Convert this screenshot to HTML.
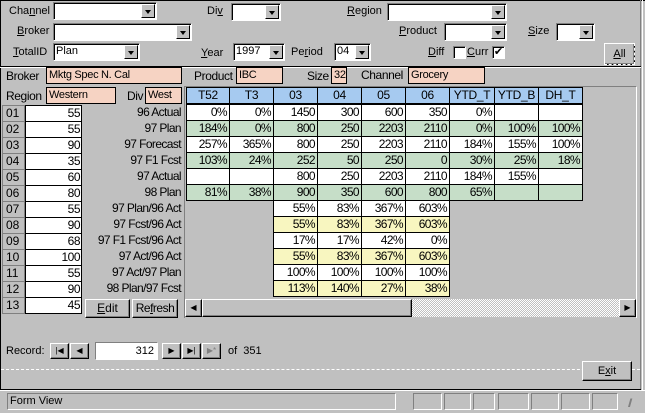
<!DOCTYPE html>
<html><head><style>
*{box-sizing:border-box;margin:0;padding:0}
body{width:645px;height:413px;background:#c0c0c0;font-family:"Liberation Sans",sans-serif;font-size:11px;color:#000;position:relative;overflow:hidden}
.a{position:absolute}
.l{position:absolute;white-space:nowrap;line-height:14px}
.cb{position:absolute;background:#fff;border:1px solid;border-color:#808080 #fff #fff #808080;box-shadow:inset 1px 1px 0 #000}
.cb i{position:absolute;right:1px;top:1px;bottom:1px;width:14px;background:#c0c0c0;border:1px solid;border-color:#fff #000 #000 #fff}
.cb i:after{content:"";position:absolute;left:3px;top:5px;border:3px solid transparent;border-top:4px solid #000;border-bottom:0}
.cb span{position:absolute;left:2px;top:1px}
.pk{position:absolute;background:#f6d3c3;border:1px solid #000;padding-left:2px;line-height:15px;letter-spacing:-0.3px}
.btn{position:absolute;background:#c0c0c0;border:1px solid;border-color:#fff #000 #000 #fff;box-shadow:inset -1px -1px 0 #808080;text-align:center}
.c{position:absolute;border:1px solid #000;text-align:right;padding-right:2px;line-height:15px;height:17px;font-size:12px;letter-spacing:-0.6px}
.h{position:absolute;background:#a6caf0;border:1px solid #000;text-align:center;line-height:15px;height:17px;font-size:12px;letter-spacing:-0.3px}
.g{background:#c6dec8}.w{background:#fff}.y{background:#f8f6c0}
.n{position:absolute;left:2px;width:23px;height:17px;border:1px solid #808080;background:#c0c0c0;line-height:15px;padding-left:3px;font-size:12px}
.v{position:absolute;left:25px;width:57px;height:17px;background:#fff;border:1px solid #000;text-align:right;padding-right:1px;line-height:15px;font-size:12px;letter-spacing:-0.5px}
.rl{position:absolute;right:464px;white-space:nowrap;line-height:16px;font-size:12px;letter-spacing:-0.6px}
u{text-decoration:underline}
</style></head><body>
<div class="a" style="left:0;top:0;width:645px;height:1px;background:#000"></div>
<div class="a" style="left:0;top:0;width:1px;height:390px;background:#000"></div>
<div class="a" style="left:640px;top:0;width:1px;height:390px;background:#808080"></div>
<div class="a" style="left:642px;top:0;width:1px;height:390px;background:#fff"></div>

<div class="l" style="left:9px;top:4px">Cha<u>n</u>nel</div>
<div class="cb" style="left:53px;top:2px;width:104px;height:18px"><i></i></div>
<div class="l" style="left:207px;top:4px">Di<u>v</u></div>
<div class="cb" style="left:231px;top:3px;width:50px;height:18px"><i></i></div>
<div class="l" style="left:347px;top:4px"><u>R</u>egion</div>
<div class="cb" style="left:387px;top:3px;width:120px;height:18px"><i></i></div>
<div class="l" style="left:17px;top:24px"><u>B</u>roker</div>
<div class="cb" style="left:53px;top:23px;width:139px;height:18px"><i></i></div>
<div class="l" style="left:399px;top:24px"><u>P</u>roduct</div>
<div class="cb" style="left:444px;top:23px;width:63px;height:18px"><i></i></div>
<div class="l" style="left:528px;top:24px"><u>S</u>ize</div>
<div class="cb" style="left:556px;top:23px;width:39px;height:18px"><i></i></div>
<div class="l" style="left:13px;top:45px"><u>T</u>otalID</div>
<div class="cb" style="left:53px;top:43px;width:87px;height:18px"><span>Plan</span><i></i></div>
<div class="l" style="left:201px;top:46px"><u>Y</u>ear</div>
<div class="cb" style="left:233px;top:43px;width:52px;height:18px"><span>1997</span><i></i></div>
<div class="l" style="left:291px;top:45px">Pe<u>r</u>iod</div>
<div class="cb" style="left:334px;top:43px;width:37px;height:18px"><span>04</span><i></i></div>
<div class="l" style="left:428px;top:45px"><u>D</u>iff</div>
<div class="cb" style="left:453px;top:46px;width:13px;height:13px"></div>
<div class="l" style="left:467px;top:45px"><u>C</u>urr</div>
<div class="cb" style="left:492px;top:46px;width:13px;height:13px;font-size:11px;line-height:10px;text-align:center">✔</div>
<div class="btn" style="left:604px;top:43px;width:31px;height:22px;line-height:20px;outline:1px dashed #fff;outline-offset:-1px"><u>A</u>ll</div>

<div class="a" style="left:0;top:66px;width:641px;height:1px;background:#000"></div>
<div class="a" style="left:0;top:67px;width:641px;height:1px;background:#fff"></div>

<div class="l" style="left:6px;top:69px;font-size:12px;letter-spacing:-0.4px">Broker</div>
<div class="pk" style="left:46px;top:67px;width:136px;height:17px">Mktg Spec N. Cal</div>
<div class="l" style="left:194px;top:69px;font-size:12px;letter-spacing:-0.4px">Product</div>
<div class="pk" style="left:236px;top:67px;width:47px;height:17px">IBC</div>
<div class="l" style="left:307px;top:69px;font-size:12px;letter-spacing:-0.4px">Size</div>
<div class="pk" style="left:331px;top:67px;width:16px;height:17px">32</div>
<div class="l" style="left:361px;top:68px;font-size:12px;letter-spacing:-0.4px">Channel</div>
<div class="pk" style="left:408px;top:67px;width:77px;height:17px">Grocery</div>
<div class="l" style="left:6px;top:89px;font-size:12px;letter-spacing:-0.4px">Region</div>
<div class="pk" style="left:46px;top:87px;width:70px;height:17px">Western</div>
<div class="l" style="left:127px;top:89px;font-size:12px;letter-spacing:-0.4px">Div</div>
<div class="pk" style="left:145px;top:87px;width:37px;height:17px">West</div>

<div class="a" style="left:184px;top:86px;width:453px;height:232px;border-top:1px solid #808080;border-left:1px solid #808080;border-right:1px solid #fff"></div>

<div class="h" style="left:186px;top:87px;width:44px">T52</div>
<div class="h" style="left:229px;top:87px;width:45px">T3</div>
<div class="h" style="left:273px;top:87px;width:45px">03</div>
<div class="h" style="left:317px;top:87px;width:45px">04</div>
<div class="h" style="left:361px;top:87px;width:45px">05</div>
<div class="h" style="left:405px;top:87px;width:45px">06</div>
<div class="h" style="left:449px;top:87px;width:46px">YTD_T</div>
<div class="h" style="left:494px;top:87px;width:45px">YTD_B</div>
<div class="h" style="left:538px;top:87px;width:45px">DH_T</div>

<div id="grid"></div>

<div class="rl" style="top:104px">96 Actual</div>
<div class="rl" style="top:120px">97 Plan</div>
<div class="rl" style="top:136px">97 Forecast</div>
<div class="rl" style="top:152px">97 F1 Fcst</div>
<div class="rl" style="top:168px">97 Actual</div>
<div class="rl" style="top:184px">98 Plan</div>
<div class="rl" style="top:200px">97 Plan/96 Act</div>
<div class="rl" style="top:216px">97 Fcst/96 Act</div>
<div class="rl" style="top:232px">97 F1 Fcst/96 Act</div>
<div class="rl" style="top:248px">97 Act/96 Act</div>
<div class="rl" style="top:264px">97 Act/97 Plan</div>
<div class="rl" style="top:280px">98 Plan/97 Fcst</div>

<div class="btn" style="left:85px;top:299px;width:45px;height:19px;line-height:17px;font-size:12px"><u>E</u>dit</div>
<div class="btn" style="left:132px;top:299px;width:46px;height:19px;line-height:17px;font-size:12px;letter-spacing:-0.5px">Re<u>f</u>resh</div>

<div class="a" style="left:185px;top:299px;width:451px;height:18px;background:repeating-conic-gradient(#c0c0c0 0 25%,#fff 0 50%) 0 0/2px 2px"></div>
<div class="btn" style="left:185px;top:299px;width:17px;height:18px;font-size:8px;line-height:16px">◀</div>
<div class="btn" style="left:202px;top:299px;width:210px;height:18px"></div>
<div class="btn" style="left:619px;top:299px;width:17px;height:18px;font-size:8px;line-height:16px">▶</div>

<div class="l" style="left:6px;top:344px">Record:</div>
<div class="btn" style="left:50px;top:343px;width:19px;height:16px;font-size:8px;line-height:14px">|◀</div>
<div class="btn" style="left:70px;top:343px;width:19px;height:16px;font-size:8px;line-height:14px">◀</div>
<div class="a" style="left:95px;top:342px;width:63px;height:18px;background:#fff;border:1px solid;border-color:#808080 #fff #fff #808080;text-align:right;padding-right:3px;line-height:16px">312</div>
<div class="btn" style="left:162px;top:343px;width:19px;height:16px;font-size:8px;line-height:14px">▶</div>
<div class="btn" style="left:182px;top:343px;width:19px;height:16px;font-size:8px;line-height:14px">▶|</div>
<div class="btn" style="left:202px;top:343px;width:19px;height:16px;font-size:8px;line-height:14px;color:#808080">▶*</div>
<div class="l" style="left:228px;top:344px">of&nbsp; 351</div>
<div class="a" style="left:1px;top:369px;width:639px;border-top:1px dashed #fff"></div>
<div class="btn" style="left:582px;top:361px;width:50px;height:20px;line-height:18px">E<u>x</u>it</div>
<div class="a" style="left:0;top:389px;width:641px;height:1px;background:#000"></div>

<div class="a" style="left:0;top:390px;width:645px;height:23px;background:#c0c0c0;border-top:1px solid #fff"></div>
<div class="a" style="left:7px;top:393px;width:389px;height:17px;border:1px solid;border-color:#808080 #fff #fff #808080;padding-left:2px;line-height:15px">Form View</div>
<div class="a" style="left:413px;top:393px;width:29px;height:17px;border:1px solid;border-color:#808080 #fff #fff #808080"></div>
<div class="a" style="left:444px;top:393px;width:27px;height:17px;border:1px solid;border-color:#808080 #fff #fff #808080"></div>
<div class="a" style="left:473px;top:393px;width:22px;height:17px;border:1px solid;border-color:#808080 #fff #fff #808080"></div>
<div class="a" style="left:498px;top:393px;width:31px;height:17px;border:1px solid;border-color:#808080 #fff #fff #808080"></div>
<div class="a" style="left:531px;top:393px;width:28px;height:17px;border:1px solid;border-color:#808080 #fff #fff #808080"></div>
<div class="a" style="left:561px;top:393px;width:29px;height:17px;border:1px solid;border-color:#808080 #fff #fff #808080"></div>
<div class="a" style="left:592px;top:393px;width:26px;height:17px;border:1px solid;border-color:#808080 #fff #fff #808080"></div>
<div class="a" style="left:628px;top:396px;font-size:12px;color:#808080;letter-spacing:-3px">////</div>

<div class="n" style="top:105px">01</div><div class="v" style="top:105px">55</div>
<div class="n" style="top:121px">02</div><div class="v" style="top:121px">55</div>
<div class="n" style="top:137px">03</div><div class="v" style="top:137px">90</div>
<div class="n" style="top:153px">04</div><div class="v" style="top:153px">35</div>
<div class="n" style="top:169px">05</div><div class="v" style="top:169px">60</div>
<div class="n" style="top:185px">06</div><div class="v" style="top:185px">80</div>
<div class="n" style="top:201px">07</div><div class="v" style="top:201px">55</div>
<div class="n" style="top:217px">08</div><div class="v" style="top:217px">90</div>
<div class="n" style="top:233px">09</div><div class="v" style="top:233px">68</div>
<div class="n" style="top:249px">10</div><div class="v" style="top:249px">100</div>
<div class="n" style="top:265px">11</div><div class="v" style="top:265px">55</div>
<div class="n" style="top:281px">12</div><div class="v" style="top:281px">90</div>
<div class="n" style="top:297px">13</div><div class="v" style="top:297px">45</div>

<script>
var xs=[186,229,273,317,361,405,449,494,538],ws=[44,45,45,45,45,45,46,45,45];
var rows=[
["0%","0%","1450","300","600","350","0%","",""],
["184%","0%","800","250","2203","2110","0%","100%","100%"],
["257%","365%","800","250","2203","2110","184%","155%","100%"],
["103%","24%","252","50","250","0","30%","25%","18%"],
["","","800","250","2203","2110","184%","155%",""],
["81%","38%","900","350","600","800","65%","",""]];
var r2=[["55%","83%","367%","603%"],["55%","83%","367%","603%"],["17%","17%","42%","0%"],["55%","83%","367%","603%"],["100%","100%","100%","100%"],["113%","140%","27%","38%"]];
var h="";
rows.forEach(function(r,i){var cl=i%2?"g":"w";r.forEach(function(t,j){h+='<div class="c '+cl+'" style="left:'+xs[j]+'px;top:'+(104+i*16)+'px;width:'+ws[j]+'px">'+t+'</div>';});});
r2.forEach(function(r,i){var cl=i%2?"y":"w";r.forEach(function(t,j){h+='<div class="c '+cl+'" style="left:'+xs[j+2]+'px;top:'+(200+i*16)+'px;width:'+ws[j+2]+'px">'+t+'</div>';});});
document.getElementById("grid").innerHTML=h;
</script>
</body></html>
